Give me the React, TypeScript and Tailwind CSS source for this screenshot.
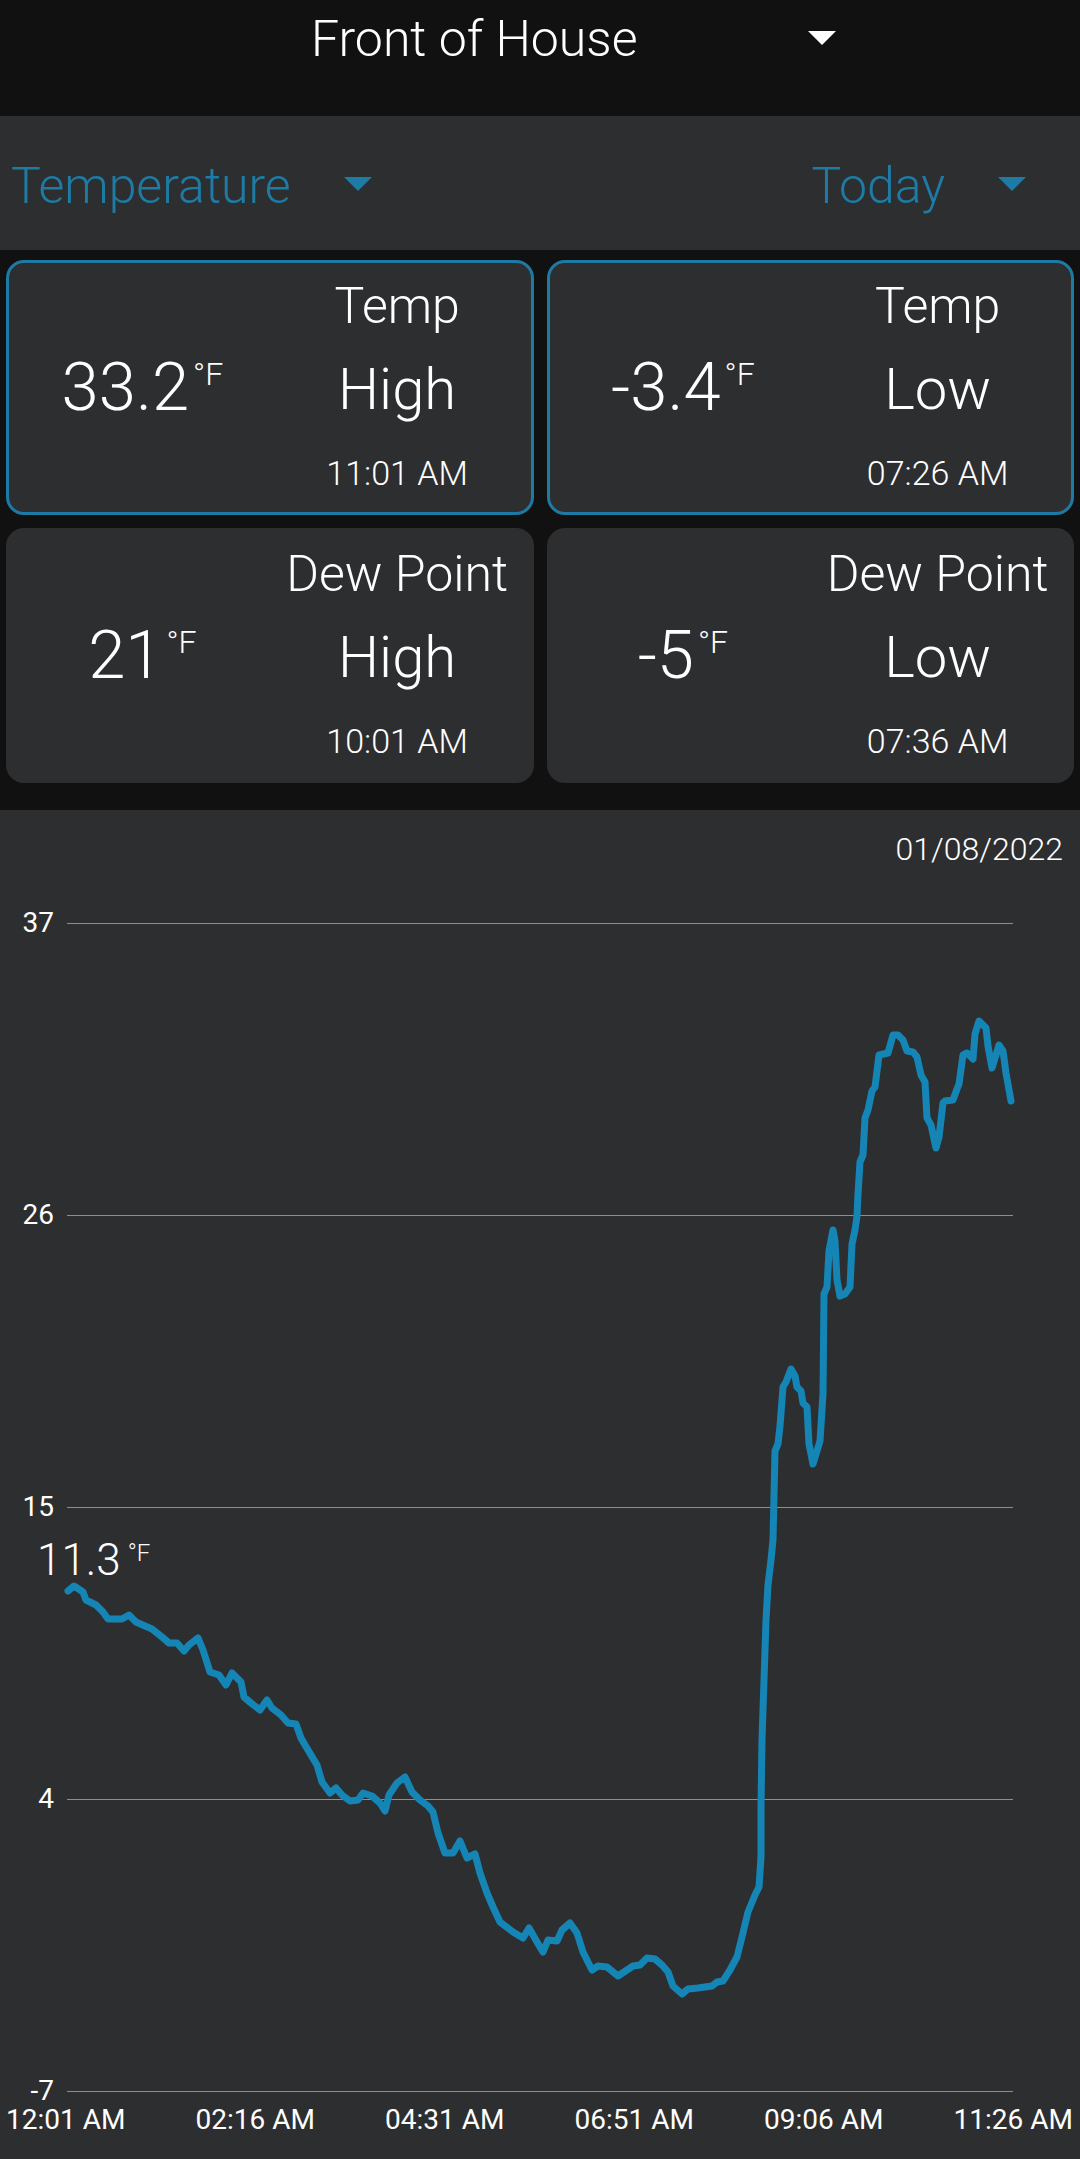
import React from "react";
import { clsx } from "clsx";

const Caret = ({ className }: { className?: string }) => (
  <svg viewBox="0 0 28 14" className={className}>
    <polygon points="0,0 28,0 14,14" fill="currentColor" />
  </svg>
);

type Stat = {
  value: string;
  label: string;
  kind: string;
  time: string;
  active?: boolean;
};

const stats: Stat[] = [
  { value: "33.2", label: "Temp", kind: "High", time: "11:01 AM", active: true },
  { value: "-3.4", label: "Temp", kind: "Low", time: "07:26 AM", active: true },
  { value: "21", label: "Dew Point", kind: "High", time: "10:01 AM" },
  { value: "-5", label: "Dew Point", kind: "Low", time: "07:36 AM" },
];

const StatCard = ({ value, label, kind, time, active }: Stat) => (
  <div
    className={clsx(
      "grid h-[255px] grid-cols-2 rounded-[18px] border-[3px] bg-[#2d2e30] px-[6px] text-white",
      active ? "border-[#1d7aa4]" : "border-[#2d2e30]"
    )}
  >
    <div className="flex items-center justify-center">
      <div className="flex items-start">
        <span className="text-[67px] leading-none">{value}</span>
        <span className="ml-1 mt-[4px] text-[32px] leading-none">°F</span>
      </div>
    </div>
    <div className="flex flex-col items-center pt-[18px]">
      <span className="text-[50px] leading-none">{label}</span>
      <span className="mt-[29px] text-[58px] leading-none">{kind}</span>
      <span className="mt-[38px] text-[34px] leading-none">{time}</span>
    </div>
  </div>
);

const yTicks = ["37", "26", "15", "4", "-7"];
const xTicks = ["12:01 AM", "02:16 AM", "04:31 AM", "06:51 AM", "09:06 AM", "11:26 AM"];

// traced temperature series, page coordinates
const series =
  "68,1591 74,1586 83,1592 86,1600 96,1605 103,1612 108,1619 122,1619 129,1615 136,1622 145,1626 152,1629 162,1637 169,1643 177,1643 184,1651 189,1645 198,1638 203,1650 210,1672 219,1675 226,1685 232,1673 241,1682 244,1697 251,1703 260,1710 267,1700 272,1708 281,1715 288,1723 296,1724 301,1738 " +
  "305,1745 317,1765 322,1782 330,1793 336,1788 342,1795 350,1801 358,1800 363,1793 372,1796 380,1803 385,1811 389,1795 397,1783 405,1777 412,1792 420,1800 428,1806 433,1812 438,1833 445,1853 453,1853 460,1841 467,1858 475,1854 480,1873 487,1893 493,1907 500,1922 513,1932 523,1938 529,1928 537,1942 543,1952 548,1940 557,1941 562,1930 570,1923 577,1933 583,1952 592,1970 598,1966 607,1967 618,1976 627,1970 633,1966 640,1965 647,1958 655,1959 662,1965 668,1972 673,1986 682,1994 688,1989 698,1988 705,1987 712,1986 717,1982 723,1981 730,1970 737,1957 742,1937 748,1912 755,1895 759,1887 761,1857 761,1807 762,1740 " +
  "764,1680 766,1620 768,1585 771,1560 773,1540 " +
  "775,1451 778,1444 780,1426 783,1387 786,1382 791,1369 795,1376 797,1387 801,1391 803,1403 807,1407 809,1444 813,1464 817,1451 820,1441 823,1394 824,1294 827,1287 829,1251 833,1230 835,1241 837,1280 840,1296 845,1294 850,1287 852,1244 855,1230 857,1216 858,1194 860,1162 863,1155 865,1118 868,1110 872,1091 875,1087 879,1055 888,1053 893,1035 898,1035 903,1040 907,1051 913,1052 917,1057 921,1075 925,1082 927,1118 931,1125 936,1148 939,1137 943,1103 945,1101 953,1100 957,1089 959,1084 963,1055 967,1053 973,1059 975,1034 979,1021 986,1028 988,1046 992,1068 996,1055 999,1045 1003,1051 1006,1073 1011,1101";

export default function App() {
  return (
    <div className="min-h-screen w-[1080px] bg-[#2d2e30] font-[Roboto,sans-serif] font-light">
      {/* station picker */}
      <div className="flex h-[116px] items-start bg-[#111111] pl-[311px] pt-[14px] text-white">
        <span className="text-[50px] leading-none">Front of House</span>
        <Caret className="ml-auto mr-[244px] mt-[17px] h-[14px] w-[28px]" />
      </div>

      {/* metric / range filters */}
      <div className="flex h-[134px] items-center bg-[#2d2e30] text-[#1d7ba5]">
        <span className="ml-[11px] mt-[6px] text-[50px] leading-none">Temperature</span>
        <Caret className="ml-[53px] mt-[2px] h-[14px] w-[28px]" />
        <span className="ml-auto mt-[6px] text-[50px] leading-none">Today</span>
        <Caret className="ml-[53px] mr-[54px] mt-[2px] h-[14px] w-[28px]" />
      </div>

      <div className="grid grid-cols-2 gap-[13px] bg-[#111111] px-[6px] pb-[27px] pt-[10px]">
        {stats.map((s) => (
          <StatCard key={s.label + s.kind} {...s} />
        ))}
      </div>

      {/* chart */}
      <div className="relative h-[1349px] bg-[#2d2e30] pt-[23px] text-white">
        <div className="pr-[17px] text-right text-[32px] leading-none">01/08/2022</div>

        <div className="mt-[44px] flex flex-col gap-[264px] font-normal">
          {yTicks.map((t) => (
            <div key={t} className="flex h-[28px] items-center">
              <span className="w-[54px] text-right text-[28px] leading-none">{t}</span>
              <div className="ml-[13px] h-px w-[946px] bg-[#8d8d8d]" />
            </div>
          ))}
        </div>

        <div className="mt-px flex justify-between pl-[6px] pr-[7px] text-[28px] font-normal leading-none">
          {xTicks.map((t) => (
            <span key={t}>{t}</span>
          ))}
        </div>

        <svg
          viewBox="0 810 1080 1349"
          className="pointer-events-none absolute left-0 top-0 h-[1349px] w-[1080px]"
        >
          <polyline
            points={series}
            fill="none"
            stroke="#1585b6"
            strokeWidth={7}
            strokeLinejoin="round"
            strokeLinecap="round"
          />
        </svg>

        <div className="absolute left-[37px] top-[728px] flex items-start">
          <span className="text-[44px] leading-none">11.3</span>
          <span className="ml-[7px] mt-[3px] text-[24px] leading-none">°F</span>
        </div>
      </div>
    </div>
  );
}
